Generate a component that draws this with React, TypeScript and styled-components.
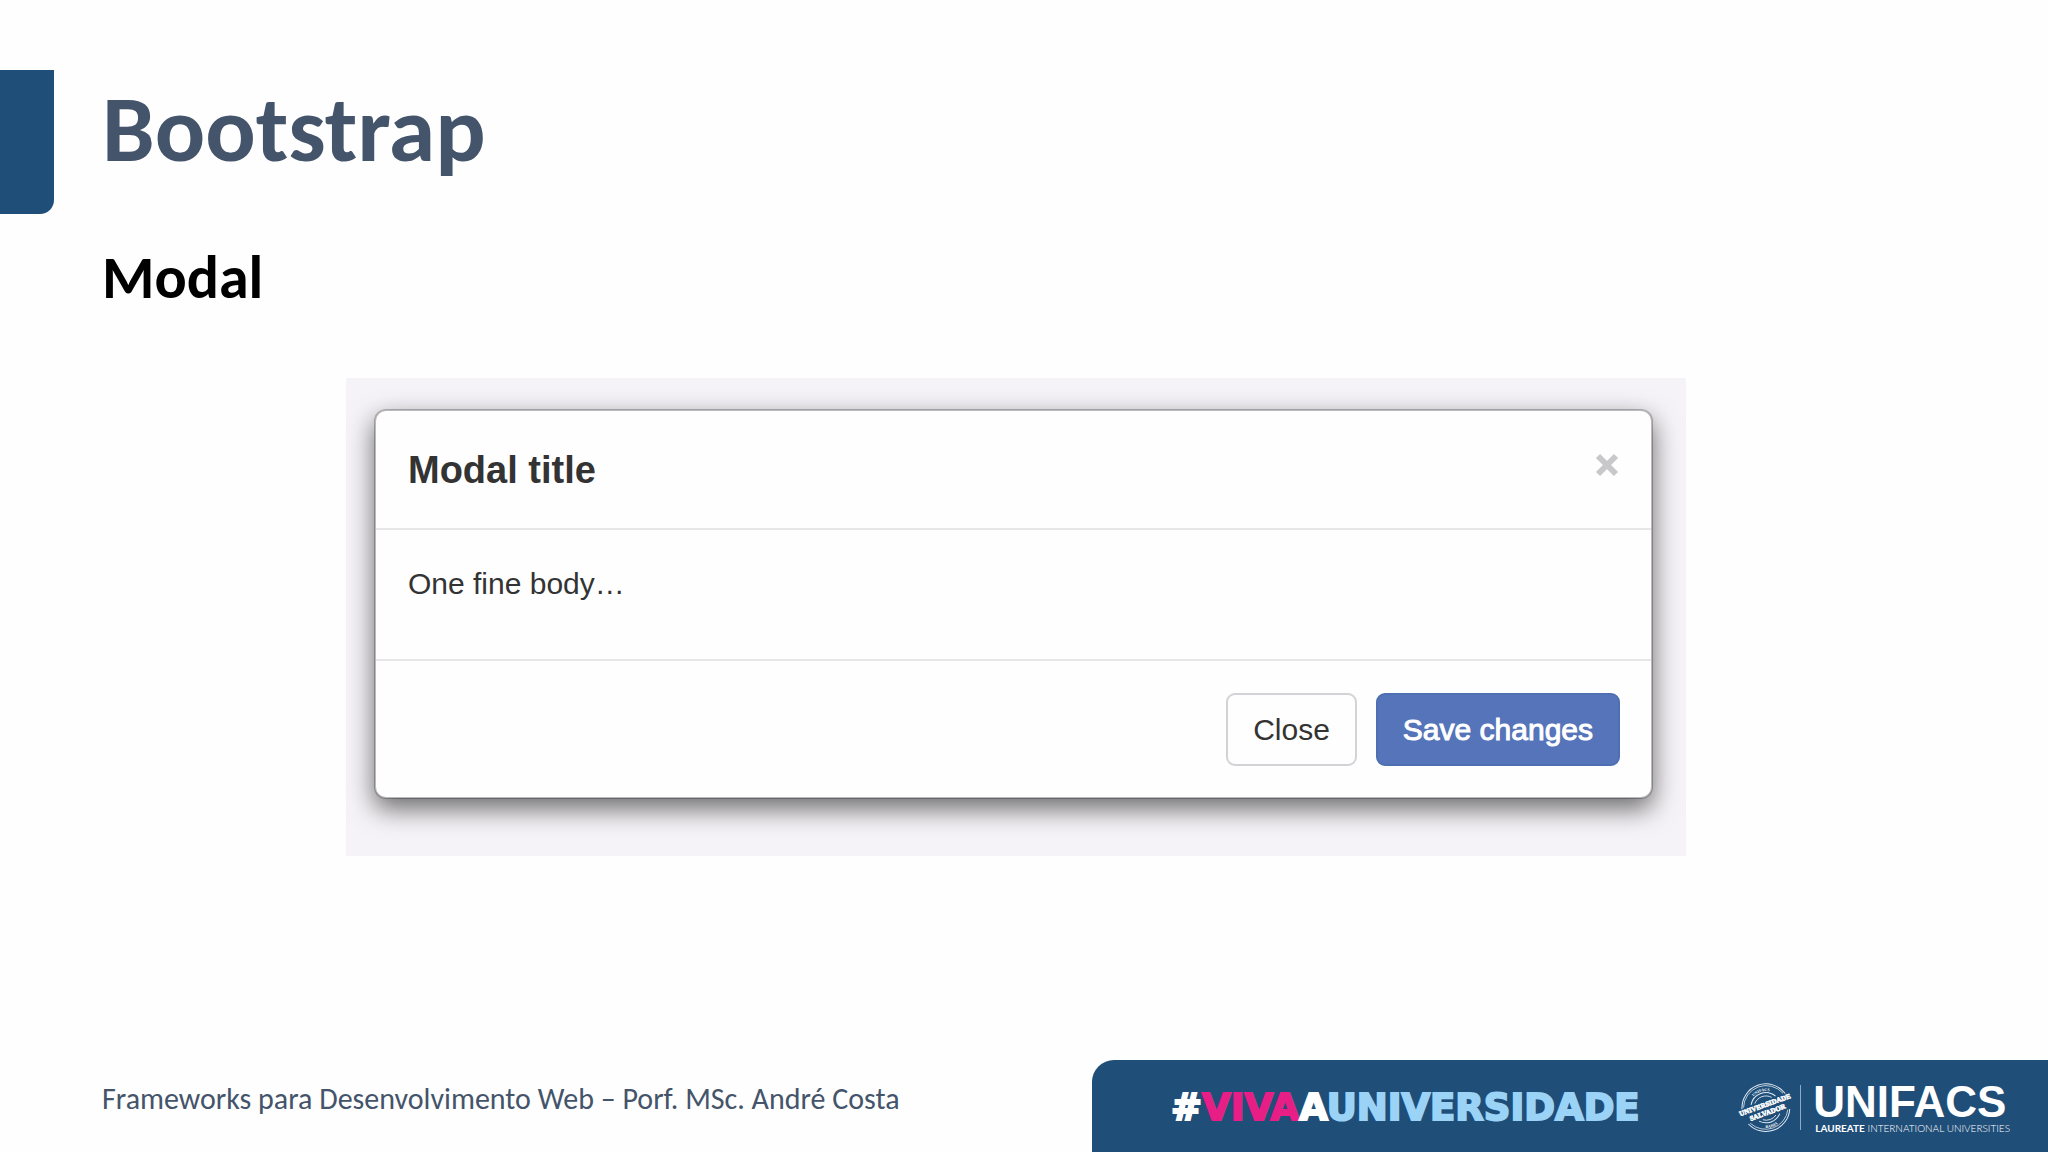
import React from 'react';
import styled, { createGlobalStyle } from 'styled-components';

const GlobalStyle = createGlobalStyle`
  *, *::before, *::after { box-sizing: border-box; }
  body { margin: 0; background: #fefefe; }
  h1, h2, h3, p { margin: 0; }
`;

const slideFont = "Carlito, Lato, 'Open Sans', sans-serif";
const dialogFont = "'Liberation Sans', Arial, sans-serif";

const Slide = styled.div`
  display: flex;
  flex-direction: column;
  min-height: 100vh;
  padding-top: 70px;
  background: #fefefe;
  font-family: ${slideFont};
`;

const Header = styled.header`
  display: flex;
  align-items: flex-start;
  gap: 48px;
`;

const Accent = styled.div`
  flex: none;
  width: 54px;
  height: 144px;
  background: #1f4e79;
  border-bottom-right-radius: 14px;
`;

const Title = styled.h1`
  color: #44546a;
  font-size: 94px;
  line-height: 118px;
  font-weight: 700;
`;

const Content = styled.main`
  flex: 1;
  padding: 32px 0 48px;
`;

const Subtitle = styled.h2`
  padding-left: 102px;
  color: #000;
  font-size: 60px;
  line-height: 64px;
  font-weight: 700;
`;

const Stage = styled.section`
  margin: 68px 362px 0 346px;
  padding: 31px 33px 57px 28px;
  background: #f5f3f7;
  font-family: ${dialogFont};
  color: #333;
`;

const Dialog = styled.div`
  background: #fefefe;
  background-clip: padding-box;
  border: 2px solid rgba(0, 0, 0, 0.24);
  border-radius: 12px;
  box-shadow: 0 10px 26px rgba(0, 0, 0, 0.56);
`;

const DialogHeader = styled.div`
  display: flex;
  justify-content: space-between;
  align-items: flex-start;
  padding: 32px 32px 31px;
  border-bottom: 2px solid #e7e6e8;
`;

const DialogTitle = styled.h3`
  font-size: 38px;
  line-height: 54px;
  font-weight: 700;
`;

const Dismiss = styled.button`
  display: flex;
  margin-top: 10px;
  padding: 0;
  border: 0;
  background: none;
  color: #c8c7c9;
  cursor: pointer;
`;

const DialogBody = styled.div`
  padding: 32px 32px 53px;
  font-size: 30px;
  line-height: 44px;
`;

const DialogFooter = styled.div`
  display: flex;
  justify-content: flex-end;
  gap: 19px;
  padding: 32px 31px 31px;
  border-top: 2px solid #e7e6e8;
`;

const Button = styled.button<{ $primary?: boolean }>`
  height: 73px;
  padding: 0 25px;
  border: 2px solid ${p => (p.$primary ? '#4f6fb3' : '#d3d2d6')};
  border-radius: 9px;
  background: ${p => (p.$primary ? '#5574b9' : '#fefefe')};
  color: ${p => (p.$primary ? '#fff' : '#333')};
  font-family: inherit;
  font-size: 30px;
  line-height: 44px;
  -webkit-text-stroke: ${p => (p.$primary ? '1px' : '0')} currentColor;
  cursor: pointer;
`;

const Footer = styled.footer`
  display: flex;
  justify-content: space-between;
`;

const Credit = styled.p`
  padding: 21px 0 0 102px;
  color: #44546a;
  font-size: 30px;
  line-height: 36px;
`;

const Banner = styled.div`
  display: flex;
  justify-content: space-between;
  align-items: center;
  width: 956px;
  height: 92px;
  padding: 3px 38px 0 79px;
  background: #1f4e79;
  border-top-left-radius: 22px;
`;

const Slogan = styled.p`
  font-family: 'DejaVu Sans', sans-serif;
  font-size: 37px;
  line-height: 44px;
  font-weight: 700;
  -webkit-text-stroke: 2px currentColor;
  white-space: nowrap;
  color: #fff;
`;

const Tint = styled.span<{ $color: string }>`
  color: ${p => p.$color};
`;

const Brand = styled.div`
  display: flex;
  align-items: center;
  gap: 9px;
  color: #fff;
`;

const Rule = styled.div`
  width: 1px;
  height: 45px;
  margin-right: 3px;
  background: #8fa9c2;
`;

const BrandName = styled.div`
  font-family: ${dialogFont};
  font-size: 44px;
  line-height: 40px;
  font-weight: 700;
`;

const BrandLine = styled.div`
  padding-left: 2px;
  font-family: Lato, sans-serif;
  font-size: 10px;
  line-height: 12px;
  font-weight: 300;
  white-space: nowrap;

  strong { font-weight: 700; }
`;

const SealDrawing = styled.svg`
  overflow: visible;
`;

const Seal = () => (
  <SealDrawing width="50" height="52" viewBox="-25 -26 50 52" fill="none" stroke="#e4edf5" aria-label="Universidade Salvador">
    <defs>
      <path id="sealTop" d="M-17 0 A17 17 0 0 1 17 0" />
      <path id="sealBottom" d="M-20 0 A20 20 0 0 0 20 0" />
    </defs>
    <g transform="rotate(-20)">
      <path d="M-23 -7 A24 24 0 0 1 23 -7" />
      <path d="M-21 -8 A22.5 22.5 0 0 1 21 -8" strokeWidth=".7" />
      <path d="M-13 -8 A15 15 0 0 1 13 -8" />
      <path d="M-9 -8 A12 12 0 0 1 9 -8" strokeWidth=".8" />
      <path d="M-22 9 A24 24 0 0 0 22 9" />
      <path d="M-20 9 A22.5 22.5 0 0 0 20 9" strokeWidth=".7" />
      <path d="M-11 10 A15 15 0 0 0 11 10" />
      <path d="M-7 10 A12 12 0 0 0 7 10" strokeWidth=".8" />
    </g>
    <g fill="#fff" stroke="none" fontFamily="'Liberation Serif', serif" fontWeight="700" textAnchor="middle">
      <g transform="rotate(-20)" fontSize="7" stroke="#fff" strokeWidth=".6">
        <text y="-1">UNIVERSIDADE</text>
        <text y="7">SALVADOR</text>
      </g>
      <g fontSize="4">
        <text><textPath href="#sealTop" startOffset="40%">UNIFACS</textPath></text>
        <text><textPath href="#sealBottom" startOffset="60%">BAHIA</textPath></text>
      </g>
    </g>
  </SealDrawing>
);

export default function App() {
  return (
    <>
      <GlobalStyle />
      <Slide>
        <Header>
          <Accent />
          <Title>Bootstrap</Title>
        </Header>
        <Content>
          <Subtitle>Modal</Subtitle>
          <Stage>
            <Dialog role="dialog" aria-labelledby="dialog-title">
              <DialogHeader>
                <DialogTitle id="dialog-title">Modal title</DialogTitle>
                <Dismiss type="button" aria-label="Close dialog">
                  <svg width="24" height="24" viewBox="0 0 24 24" stroke="currentColor" strokeWidth="6">
                    <path d="M3 3 L21 21 M21 3 L3 21" />
                  </svg>
                </Dismiss>
              </DialogHeader>
              <DialogBody>
                <p>One fine body…</p>
              </DialogBody>
              <DialogFooter>
                <Button type="button">Close</Button>
                <Button type="button" $primary>Save changes</Button>
              </DialogFooter>
            </Dialog>
          </Stage>
        </Content>
        <Footer>
          <Credit>Frameworks para Desenvolvimento Web – Porf. MSc. André Costa</Credit>
          <Banner>
            <Slogan>
              #<Tint $color="#e61e86">VIVA</Tint>A<Tint $color="#9bd3f7">UNIVERSIDADE</Tint>
            </Slogan>
            <Brand>
              <Seal />
              <Rule />
              <div>
                <BrandName>UNIFACS</BrandName>
                <BrandLine>
                  <strong>LAUREATE</strong> INTERNATIONAL UNIVERSITIES
                </BrandLine>
              </div>
            </Brand>
          </Banner>
        </Footer>
      </Slide>
    </>
  );
}
